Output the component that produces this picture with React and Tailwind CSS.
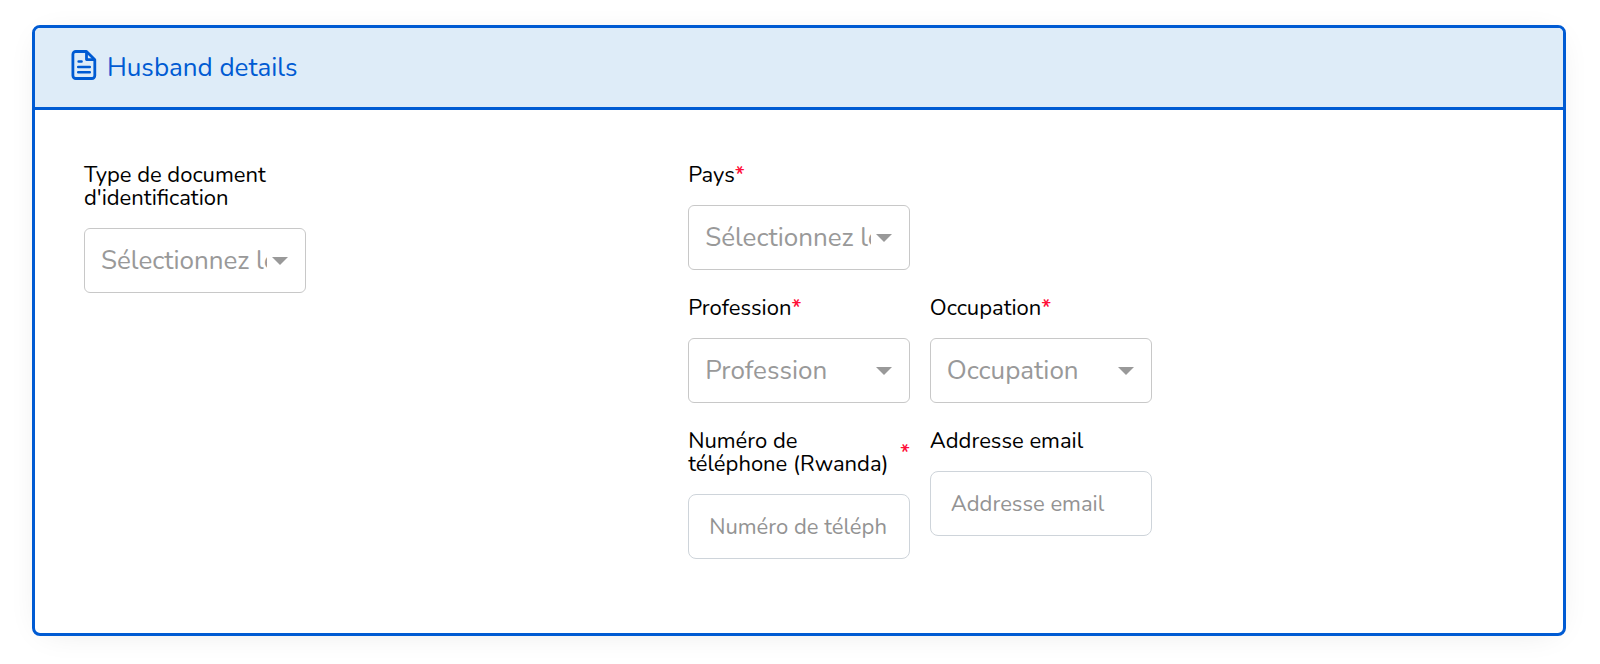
function Label({ htmlFor, text, required }) {
  return (
    <label htmlFor={htmlFor} className="mb-[18px] flex items-center text-[22px] leading-[23px] text-black">
      <span>{text}</span>
      {required && <span className="font-semibold text-[#ff0f39]">*</span>}
    </label>
  );
}

function SelectField({ id, text, placeholder, required }) {
  return (
    <div>
      <Label htmlFor={id} text={text} required={required} />
      <div className="relative">
        <select
          id={id}
          defaultValue=""
          className="block h-[65px] w-full appearance-none rounded-md border border-[#c8c8c8] bg-white pr-[38px] pl-4 text-[26px] text-[#999999]"
        >
          <option value="">{placeholder}</option>
        </select>
        <svg viewBox="0 0 16 8" className="pointer-events-none absolute top-[29px] right-[18px] h-2 w-4 fill-[#999999]" aria-hidden="true">
          <path d="M0 0h16L8 8z" />
        </svg>
      </div>
    </div>
  );
}

function TextField({ id, type, text, placeholder, required }) {
  return (
    <div>
      <Label htmlFor={id} text={text} required={required} />
      <input
        id={id}
        type={type}
        placeholder={placeholder}
        className="block h-[65px] w-full rounded-lg border border-[#ced4da] bg-white pr-[22px] pl-5 text-[22px] text-black placeholder:text-[#939393]"
      />
    </div>
  );
}

function DocumentIcon() {
  return (
    <svg viewBox="0 0 26 30" className="mb-1.5 h-[30px] w-[26px] text-[#005bd3]" fill="none" stroke="currentColor" strokeWidth="2.8" strokeLinejoin="round" aria-hidden="true">
      <path d="M4.8 1.5H15.5L23.8 9.8V25.6a2.9 2.9 0 0 1-2.9 2.9H4.8a2.9 2.9 0 0 1-2.9-2.9V4.4a2.9 2.9 0 0 1 2.9-2.9z" />
      <path d="M15.5 1.5V9.600H23.800" />
      <path d="M7.600 11.500h3M7.200 16.900h11.600M7.200 22.300h11.600" strokeWidth="2.500" strokeLinecap="round" />
    </svg>
  );
}

export default function App() {
  return (
    <main className="bg-white px-8 pt-[25px] pb-7 font-['Nunito','Lato',sans-serif]">
      <section className="mr-[2px] overflow-hidden rounded-lg border-3 border-[#005bd3] bg-white shadow-[0_4px_32px_-12px_rgba(0,0,0,0.12)]">
        <header className="flex h-[82px] items-center gap-[10px] border-b-3 border-[#005bd3] bg-[#deecf8] px-9">
          <DocumentIcon />
          <h1 className="text-[26px] text-[#005bd3]">Husband details</h1>
        </header>
        <form className="grid grid-cols-12 items-start gap-x-5 px-[49px] pt-[54px] pb-[74px]">
          <div className="col-span-2">
            <SelectField id="document" text="Type de document d'identification" placeholder="Sélectionnez le type" />
          </div>
          <div className="col-span-4 col-start-6 grid grid-cols-2 items-start gap-x-5 gap-y-[27px]">
            <SelectField id="country" text="Pays" placeholder="Sélectionnez le pays" required />
            <div className="col-start-1">
              <SelectField id="profession" text="Profession" placeholder="Profession" required />
            </div>
            <SelectField id="occupation" text="Occupation" placeholder="Occupation" required />
            <TextField id="phone" type="tel" text="Numéro de téléphone (Rwanda)" placeholder="Numéro de téléphone" required />
            <TextField id="email" type="email" text="Addresse email" placeholder="Addresse email" />
          </div>
        </form>
      </section>
    </main>
  );
}
